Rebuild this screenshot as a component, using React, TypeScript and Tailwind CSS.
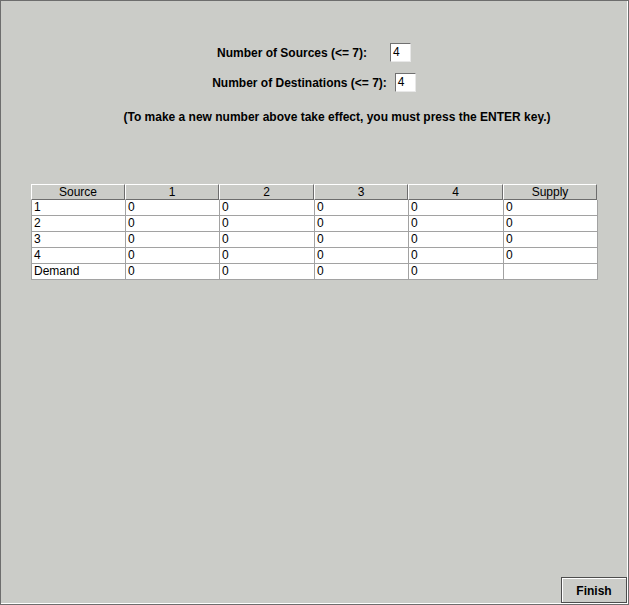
const COLS = ["Source", "1", "2", "3", "4", "Supply"];
const ROWS = [
  ["1", "0", "0", "0", "0", "0"],
  ["2", "0", "0", "0", "0", "0"],
  ["3", "0", "0", "0", "0", "0"],
  ["4", "0", "0", "0", "0", "0"],
  ["Demand", "0", "0", "0", "0", ""],
];

const grid = "grid grid-cols-[94px_94px_95px_94px_95px_94px]";

function NumBox({ value }: { value: string }) {
  return (
    <div className="w-[21px] h-[19px] bg-white border border-t-[#707070] border-l-[#707070] border-r-[#e8e8e8] border-b-[#e8e8e8] text-[12px] leading-[17px] pl-[2px] text-black">
      {value}
    </div>
  );
}

export default function App() {
  return (
    <div
      className="w-[629px] h-[605px] bg-[#cbccc8] border border-[#6d6d6d] flex flex-col text-black"
      style={{ fontFamily: '"Liberation Sans", Arial, sans-serif' }}
    >
      <div className="flex-1 flex flex-col border-r border-b border-r-white border-b-white">
        <div className="flex flex-col items-center pt-[42px]">
          <div className="flex items-center gap-[23px]">
            <span className="text-[12px] font-bold">Number of Sources (&lt;= 7):</span>
            <NumBox value="4" />
          </div>
          <div className="flex items-center gap-[8px] mt-[11px]">
            <span className="text-[12px] font-bold">Number of Destinations (&lt;= 7):</span>
            <NumBox value="4" />
          </div>
          <p className="text-[12px] font-bold mt-[16px] pl-[46px]">
            (To make a new number above take effect, you must press the ENTER key.)
          </p>
        </div>

        <div className="ml-[30px] mt-[58px] w-[566px] text-[12px]">
          <div className={grid}>
            {COLS.map((c) => (
              <div
                key={c}
                className="h-[16px] bg-[#cbccc8] border border-t-white border-l-white border-r-[#6d6d6d] border-b-[#6d6d6d] text-center leading-[14px]"
              >
                {c}
              </div>
            ))}
          </div>
          {ROWS.map((r, i) => (
            <div key={i} className={`${grid} border-l border-[#a2a2a2]`}>
              {r.map((v, j) => (
                <div
                  key={j}
                  className="h-[16px] bg-white border-r border-b border-[#a2a2a2] pl-[2px] leading-[15px]"
                >
                  {v}
                </div>
              ))}
            </div>
          ))}
        </div>

        <div className="flex-1" />
        <div className="flex justify-end">
          <button className="w-[66px] h-[26px] pt-[2px] bg-[#cbccc8] border border-[#4d4d4d] shadow-[inset_1px_1px_0_#ffffff] text-[12px] font-bold">
            Finish
          </button>
        </div>
      </div>
    </div>
  );
}
